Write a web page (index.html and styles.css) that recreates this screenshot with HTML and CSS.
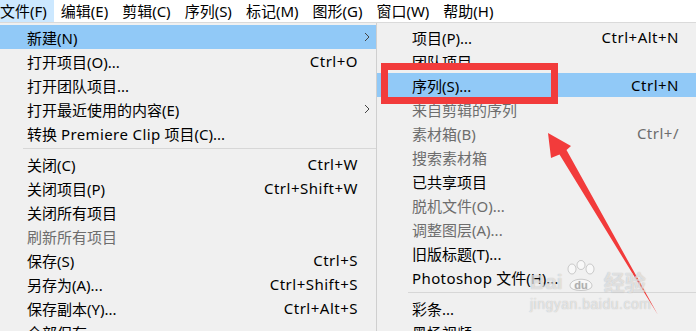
FILE: index.html
```html
<!DOCTYPE html>
<html lang="zh-CN">
<head>
  <meta charset="UTF-8">
  <title>文件菜单</title>
  <link rel="stylesheet" href="styles.css">
</head>
<body>
  <div class="window">
    <div class="menubar">
      <span class="bar-item active">文件(F)</span>
      <span class="bar-item">编辑(E)</span>
      <span class="bar-item">剪辑(C)</span>
      <span class="bar-item">序列(S)</span>
      <span class="bar-item">标记(M)</span>
      <span class="bar-item">图形(G)</span>
      <span class="bar-item">窗口(W)</span>
      <span class="bar-item">帮助(H)</span>
    </div>

    <div class="menus">
      <div class="menu file-menu">
        <div class="row hover"><span class="label">新建(N)</span><span class="arrow"><svg width="6" height="10" viewBox="0 0 6 10"><path d="M1 1 L5 5 L1 9" fill="none" stroke="#444" stroke-width="1"/></svg></span></div>
        <div class="row"><span class="label">打开项目(O)...</span><span class="key">Ctrl+O</span><span class="arrow"></span></div>
        <div class="row"><span class="label">打开团队项目...</span><span class="arrow"></span></div>
        <div class="row"><span class="label">打开最近使用的内容(E)</span><span class="arrow"><svg width="6" height="10" viewBox="0 0 6 10"><path d="M1 1 L5 5 L1 9" fill="none" stroke="#444" stroke-width="1"/></svg></span></div>
        <div class="row"><span class="label">转换 <span class="lat">Premiere Clip</span> 项目(C)...</span><span class="arrow"></span></div>
        <div class="sep"></div>
        <div class="row"><span class="label">关闭(C)</span><span class="key">Ctrl+W</span><span class="arrow"></span></div>
        <div class="row"><span class="label">关闭项目(P)</span><span class="key">Ctrl+Shift+W</span><span class="arrow"></span></div>
        <div class="row"><span class="label">关闭所有项目</span><span class="arrow"></span></div>
        <div class="row off"><span class="label">刷新所有项目</span><span class="arrow"></span></div>
        <div class="row"><span class="label">保存(S)</span><span class="key">Ctrl+S</span><span class="arrow"></span></div>
        <div class="row"><span class="label">另存为(A)...</span><span class="key">Ctrl+Shift+S</span><span class="arrow"></span></div>
        <div class="row"><span class="label">保存副本(Y)...</span><span class="key">Ctrl+Alt+S</span><span class="arrow"></span></div>
        <div class="row"><span class="label">全部保存</span><span class="arrow"></span></div>
      </div>

      <div class="menu sub-menu">
        <div class="row"><span class="label">项目(P)...</span><span class="key">Ctrl+Alt+N</span></div>
        <div class="row"><span class="label">团队项目...</span></div>
        <div class="row hover"><span class="label">序列(S)...</span><span class="key">Ctrl+N</span></div>
        <div class="row off"><span class="label">来自剪辑的序列</span></div>
        <div class="row off"><span class="label">素材箱(B)</span><span class="key">Ctrl+/</span></div>
        <div class="row off"><span class="label">搜索素材箱</span></div>
        <div class="row"><span class="label">已共享项目</span></div>
        <div class="row off"><span class="label">脱机文件(O)...</span></div>
        <div class="row off"><span class="label">调整图层(A)...</span></div>
        <div class="row"><span class="label">旧版标题(T)...</span></div>
        <div class="row"><span class="label"><span class="lat">Photoshop</span> 文件(H)...</span></div>
        <div class="sep"></div>
        <div class="row"><span class="label">彩条...</span></div>
        <div class="row"><span class="label">黑场视频</span></div>
      </div>
    </div>

    <!-- annotation drawn over the screenshot -->
    <div class="mark-box"></div>
    <svg class="mark-arrow" width="696" height="331" viewBox="0 0 696 331">
      <polygon points="548,133 571,146 566.5,150 658,315 559.5,154.5 551,158" fill="#f23b3b"/>
    </svg>

    <div class="watermark">
      <div class="wm-logo">
        <span class="wm-bai">Bai</span>
        <svg class="wm-paw" width="34" height="34" viewBox="0 0 34 34">
          <g fill="rgba(255,255,255,0.55)" stroke="rgba(120,120,120,0.35)" stroke-width="1">
            <ellipse cx="8" cy="9" rx="4" ry="5"/>
            <ellipse cx="17" cy="5" rx="4" ry="4.5"/>
            <ellipse cx="26" cy="9" rx="4" ry="5"/>
            <path d="M6 26 C6 17 28 17 28 26 C28 32 6 32 6 26 Z"/>
          </g>
          <text x="17" y="29" text-anchor="middle" class="wm-du">du</text>
        </svg>
        <span class="wm-jy">经验</span>
      </div>
      <div class="wm-url">jingyan.baidu.com</div>
    </div>
  </div>
</body>
</html>
```

FILE: styles.css
```css
html, body {
  margin: 0;
  padding: 0;
}
body {
  width: 696px;
  height: 331px;
  overflow: hidden;
  background: #f0f0f0;
  font-family: "Noto Sans", "Noto Sans CJK SC", sans-serif;
  font-size: 15px;
  color: #000;
}
.window {
  position: relative;
  width: 696px;
  height: 331px;
  overflow: hidden;
}
.menubar {
  display: flex;
  height: 22px;
  background: #fff;
  border-bottom: 1px solid #dadada;
  margin-left: -7px;
}
.bar-item {
  display: flex;
  align-items: center;
  padding: 0 7px;
  line-height: 22px;
  white-space: nowrap;
}
.bar-item.active {
  background: #cce8ff;
}
.menus {
  display: flex;
  padding-top: 2px;
}
.menu {
  display: flex;
  flex-direction: column;
}
.file-menu {
  width: 376px;
}
.sub-menu {
  flex: 1;
  border-left: 1px solid #cfcfcf;
  margin-top: -2px;
  padding-top: 2px;
}
.row {
  display: flex;
  align-items: center;
  height: 24px;
  white-space: nowrap;
}
.file-menu .row {
  padding-left: 27px;
}
.sub-menu .row {
  padding-left: 35px;
  padding-right: 17px;
}
.row.hover {
  background: #91c9f7;
}
.row.off {
  color: #6d6d6d;
}
.label {
  flex: 1;
}
.key {
  margin-left: 20px;
  letter-spacing: 0.5px;
}
.lat {
  letter-spacing: 0.4px;
}
.arrow {
  width: 18px;
  display: flex;
  justify-content: center;
  align-items: center;
}
.sep {
  height: 7px;
  display: flex;
  align-items: center;
}
.sep::after {
  content: "";
  flex: 1;
  height: 1px;
  background: #d7d7d7;
}
.file-menu .sep {
  margin-left: 23px;
}
.sub-menu .sep {
  margin-left: 31px;
}
.mark-box {
  position: absolute;
  left: 381px;
  top: 63px;
  width: 163px;
  height: 27px;
  border: 7px solid #f23b3b;
}
.mark-arrow {
  position: absolute;
  left: 0;
  top: 0;
  pointer-events: none;
}
.watermark {
  position: absolute;
  left: 530px;
  top: 256px;
  color: rgba(255, 255, 255, 0.6);
  text-shadow: 0 0 1px rgba(90, 90, 90, 0.45);
  font-family: "Liberation Sans", Arial, sans-serif;
}
.wm-logo {
  display: flex;
  align-items: flex-end;
  height: 38px;
}
.wm-bai {
  font-size: 21px;
  font-weight: bold;
  line-height: 24px;
}
.wm-paw {
  margin: 0 2px 0 1px;
}
.wm-du {
  font-family: "Liberation Sans", Arial, sans-serif;
  font-size: 11px;
  font-weight: bold;
  fill: rgba(130, 130, 130, 0.5);
}
.wm-jy {
  font-family: "Noto Sans CJK SC", sans-serif;
  font-size: 21px;
  font-weight: bold;
  line-height: 26px;
  margin-left: 4px;
}
.wm-url {
  font-size: 14px;
  letter-spacing: 0.5px;
  margin-top: 2px;
}
```
